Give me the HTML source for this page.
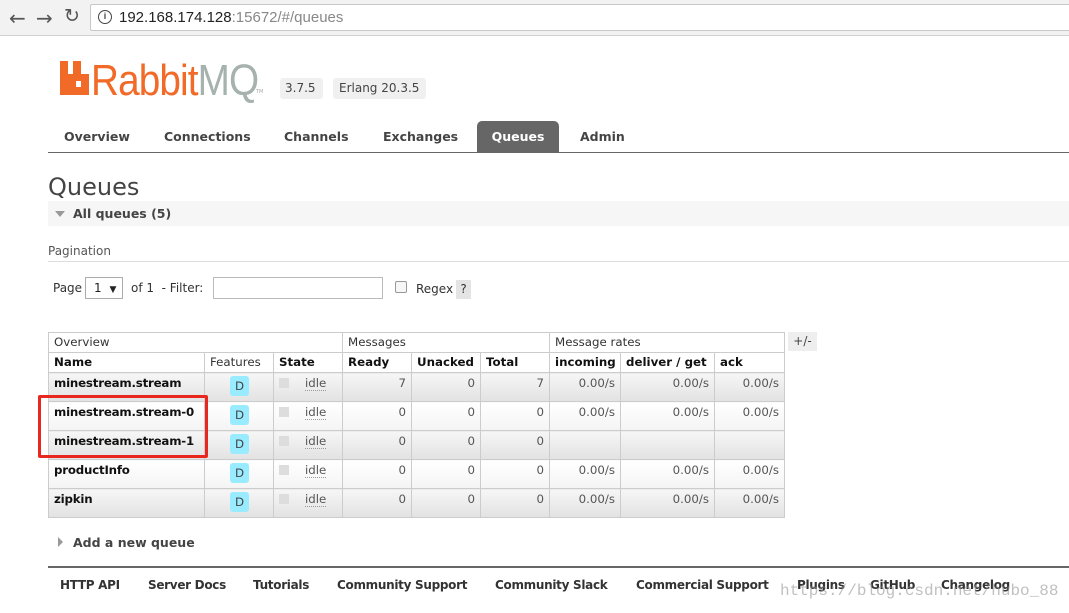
<!DOCTYPE html>
<html><head><meta charset="utf-8"><style>
*{margin:0;padding:0;box-sizing:border-box}
body{width:1069px;height:613px;overflow:hidden;background:#fff;font-family:"DejaVu Sans","Liberation Sans",sans-serif;font-size:12px;color:#444;position:relative}
.a{position:absolute;white-space:nowrap}
.chrome{left:0;top:0;width:1069px;height:36px;background:#f2f2f2;border-bottom:1px solid #d0d0d0}
.url{left:90px;top:4px;width:990px;height:27px;background:#fff;border:1px solid #c8c8c8;border-radius:2px;font-family:"Liberation Sans",sans-serif;font-size:15px;color:#222;padding:4px 0 0 28px}
.tab{top:121px;height:31px;font-weight:bold;font-size:12.5px;color:#444;padding-top:8px}
table{position:absolute;left:48px;top:332px;width:736px;border-collapse:collapse;table-layout:fixed;font-size:11.8px}
td{border:1px solid #ccc;padding:0 5px;vertical-align:top;height:29px;padding-top:3px;color:#555;white-space:nowrap;overflow:hidden}
tr.h td{height:20px;padding-top:2px;color:#333}
tr.h2 td{font-weight:bold;color:#111}
tr.h2 td.n{font-weight:normal;color:#333}
tr.g td{background:linear-gradient(#f6f6f6,#e2e2e2)}
tr.w td{background:linear-gradient(#fff,#f4f4f4)}
td.nm{font-weight:bold;color:#111;letter-spacing:-0.2px}
td.r{text-align:right}
.d{display:inline-block;width:19px;height:20px;background:#99ebff;border-radius:3px;color:#444;text-align:center;line-height:20px;margin:3px 0 0 25px}
.ck{display:inline-block;width:10px;height:10px;background:#ddd;margin:2px 0 0 0;vertical-align:top}
.idle{display:inline-block;margin-left:16px;border-bottom:1px dotted #999;line-height:14px}
.f{position:absolute;top:578px;font-weight:bold;font-size:12px;white-space:nowrap;color:#333;letter-spacing:-0.3px}
</style></head><body>
<div class="a chrome"></div>
<div class="a" style="left:9px;top:6px;font-size:20px;color:#555">&#8592;</div>
<div class="a" style="left:36px;top:6px;font-size:20px;color:#555">&#8594;</div>
<div class="a" style="left:64px;top:5px;font-size:19px;color:#555">&#8635;</div>
<div class="a url">192.168.174.128<span style="color:#888">:15672/#/queues</span></div>
<div class="a" style="left:98px;top:10px;width:14px;height:14px;border:1.5px solid #444;border-radius:50%;font-size:9px;text-align:center;line-height:11px;color:#444;font-weight:bold;font-family:'Liberation Sans'">i</div>

<svg class="a" style="left:60px;top:61px" width="30" height="34"><rect x="0" y="0" width="8" height="34" fill="#f26a28"/><rect x="13" y="0" width="8" height="14" fill="#f26a28"/><rect x="0" y="13" width="29" height="21" fill="#f26a28"/><rect x="16" y="20" width="5" height="6" fill="#fff"/></svg>
<div class="a" style="left:91px;top:56px;font-family:'Liberation Sans';font-size:44px;letter-spacing:-1px;color:#f26a28;transform:scaleX(.88);transform-origin:left">Rabbit<span style="color:#a6b2ad">MQ</span></div>
<div class="a" style="left:256px;top:89px;font-size:5px;color:#aaa">TM</div>
<div class="a" style="left:280px;top:78px;width:43px;height:21px;background:#f0f0f0;border-radius:3px;font-size:12px;padding:3px 0 0 5px">3.7.5</div>
<div class="a" style="left:333px;top:78px;width:93px;height:21px;background:#f0f0f0;border-radius:3px;font-size:12px;padding:3px 0 0 6px">Erlang 20.3.5</div>

<div class="a tab" style="left:64px">Overview</div>
<div class="a tab" style="left:164px">Connections</div>
<div class="a tab" style="left:284px">Channels</div>
<div class="a tab" style="left:383px">Exchanges</div>
<div class="a tab" style="left:477px;width:82px;background:#666;color:#fff;border-radius:5px 5px 0 0;text-align:center">Queues</div>
<div class="a tab" style="left:580px">Admin</div>
<div class="a" style="left:48px;top:152px;width:1021px;height:1px;background:#666"></div>

<div class="a" style="left:48px;top:173px;font-size:24px;color:#444">Queues</div>
<div class="a" style="left:48px;top:201px;width:1021px;height:25px;background:#f6f6f6"></div>
<div class="a" style="left:55px;top:211px;width:0;height:0;border-left:5px solid transparent;border-right:5px solid transparent;border-top:6px solid #999"></div>
<div class="a" style="left:73px;top:206px;font-weight:bold;font-size:12.5px">All queues (5)</div>
<div class="a" style="left:48px;top:244px;font-size:12px;color:#555">Pagination</div>
<div class="a" style="left:48px;top:261px;width:1021px;height:1px;background:#ddd"></div>
<div class="a" style="left:53px;top:281px;font-size:12px;color:#333">Page</div>
<div class="a" style="left:85px;top:277px;width:38px;height:22px;border:1px solid #aaa;font-size:12px;padding:3px 0 0 8px;color:#222">1 <span style="font-size:9px;margin-left:4px">&#9660;</span></div>
<div class="a" style="left:131px;top:281px;font-size:12px;color:#333">of 1 &nbsp;- Filter:</div>
<div class="a" style="left:213px;top:277px;width:170px;height:22px;border:1px solid #bbb"></div>
<div class="a" style="left:395px;top:281px;width:12px;height:12px;border:1px solid #999;border-radius:2px;background:#f6f6f6"></div>
<div class="a" style="left:416px;top:282px;font-size:12px;color:#333">Regex</div>
<div class="a" style="left:456px;top:280px;width:15px;height:19px;background:#e4e4e4;font-size:12px;text-align:center;padding-top:2px;color:#333">?</div>

<table>
<colgroup><col style="width:156px"><col style="width:69px"><col style="width:69px"><col style="width:69px"><col style="width:69px"><col style="width:69px"><col style="width:71px"><col style="width:94px"><col style="width:70px"></colgroup>
<tr class="h"><td colspan="3">Overview</td><td colspan="3">Messages</td><td colspan="3">Message rates</td></tr>
<tr class="h2 h"><td>Name</td><td class="n">Features</td><td>State</td><td>Ready</td><td>Unacked</td><td>Total</td><td>incoming</td><td>deliver / get</td><td>ack</td></tr>
<tr class="g"><td class="nm">minestream.stream</td><td style="padding:0"><span class="d">D</span></td><td><span class="ck"></span><span class="idle">idle</span></td><td class="r">7</td><td class="r">0</td><td class="r">7</td><td class="r">0.00/s</td><td class="r">0.00/s</td><td class="r">0.00/s</td></tr>
<tr class="w"><td class="nm">minestream.stream-0</td><td style="padding:0"><span class="d">D</span></td><td><span class="ck"></span><span class="idle">idle</span></td><td class="r">0</td><td class="r">0</td><td class="r">0</td><td class="r">0.00/s</td><td class="r">0.00/s</td><td class="r">0.00/s</td></tr>
<tr class="g"><td class="nm">minestream.stream-1</td><td style="padding:0"><span class="d">D</span></td><td><span class="ck"></span><span class="idle">idle</span></td><td class="r">0</td><td class="r">0</td><td class="r">0</td><td></td><td></td><td></td></tr>
<tr class="w"><td class="nm">productInfo</td><td style="padding:0"><span class="d">D</span></td><td><span class="ck"></span><span class="idle">idle</span></td><td class="r">0</td><td class="r">0</td><td class="r">0</td><td class="r">0.00/s</td><td class="r">0.00/s</td><td class="r">0.00/s</td></tr>
<tr class="g"><td class="nm">zipkin</td><td style="padding:0"><span class="d">D</span></td><td><span class="ck"></span><span class="idle">idle</span></td><td class="r">0</td><td class="r">0</td><td class="r">0</td><td class="r">0.00/s</td><td class="r">0.00/s</td><td class="r">0.00/s</td></tr>
</table>
<div class="a" style="left:788px;top:332px;width:29px;height:19px;background:#eee;font-size:12px;text-align:center;padding-top:2px;color:#444">+/-</div>
<div class="a" style="left:38px;top:395px;width:170px;height:63px;border:3px solid #e8281e;border-radius:2px"></div>

<div class="a" style="left:58px;top:537px;width:0;height:0;border-top:5px solid transparent;border-bottom:5px solid transparent;border-left:5px solid #999"></div>
<div class="a" style="left:73px;top:535px;font-weight:bold;font-size:12.5px">Add a new queue</div>
<div class="a" style="left:48px;top:566px;width:1021px;height:2px;background:#666"></div>
<div class="f" style="left:60px">HTTP API</div>
<div class="f" style="left:148px">Server Docs</div>
<div class="f" style="left:253px">Tutorials</div>
<div class="f" style="left:337px">Community Support</div>
<div class="f" style="left:495px">Community Slack</div>
<div class="f" style="left:636px">Commercial Support</div>
<div class="f" style="left:797px">Plugins</div>
<div class="f" style="left:870px">GitHub</div>
<div class="f" style="left:941px">Changelog</div>
<div class="a" style="left:780px;top:582px;font-family:'Liberation Mono';font-size:16px;color:rgba(150,150,150,.6)">https://blog.csdn.net/hubo_88</div>
</body></html>
